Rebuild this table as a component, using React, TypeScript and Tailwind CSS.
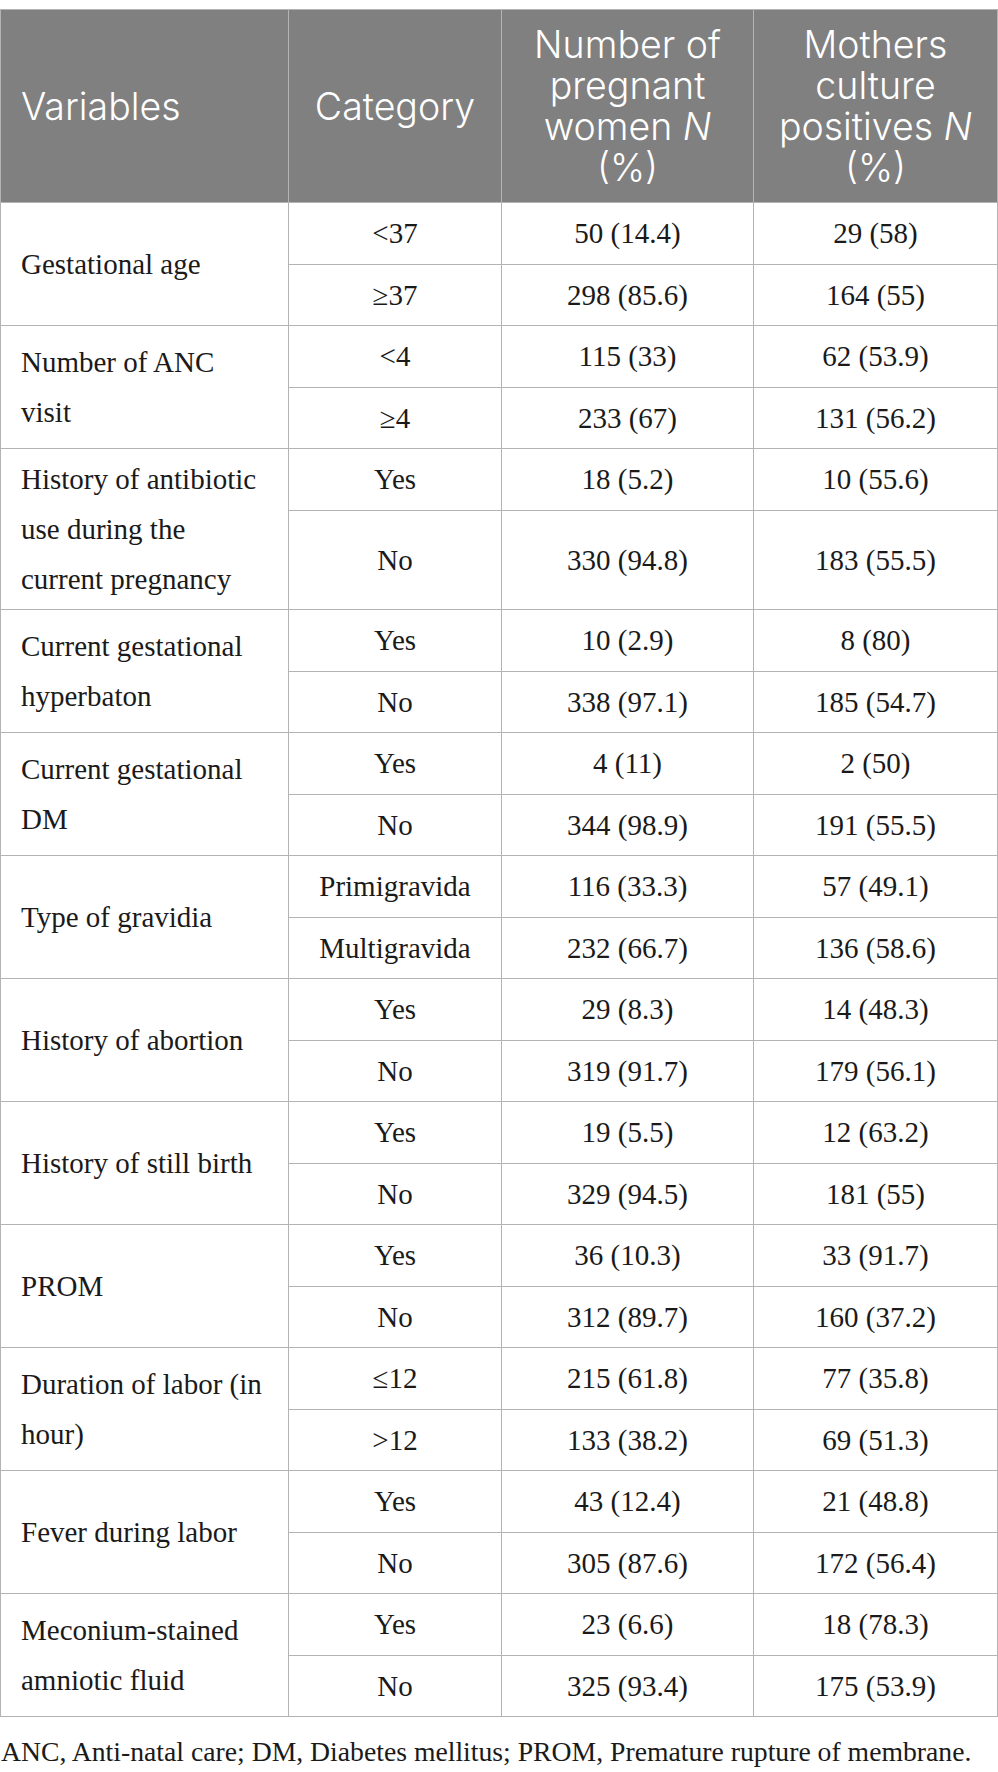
import React from 'react';

type Group = {
  variable: string;
  rows: [string, string, string][];
  tall?: boolean;
};

const groups: Group[] = [
  { variable: 'Gestational age', rows: [['<37', '50 (14.4)', '29 (58)'], ['≥37', '298 (85.6)', '164 (55)']] },
  { variable: 'Number of ANC visit', rows: [['<4', '115 (33)', '62 (53.9)'], ['≥4', '233 (67)', '131 (56.2)']] },
  {
    variable: 'History of antibiotic use during the current pregnancy',
    rows: [['Yes', '18 (5.2)', '10 (55.6)'], ['No', '330 (94.8)', '183 (55.5)']],
    tall: true,
  },
  { variable: 'Current gestational hyperbaton', rows: [['Yes', '10 (2.9)', '8 (80)'], ['No', '338 (97.1)', '185 (54.7)']] },
  { variable: 'Current gestational DM', rows: [['Yes', '4 (11)', '2 (50)'], ['No', '344 (98.9)', '191 (55.5)']] },
  { variable: 'Type of gravidia', rows: [['Primigravida', '116 (33.3)', '57 (49.1)'], ['Multigravida', '232 (66.7)', '136 (58.6)']] },
  { variable: 'History of abortion', rows: [['Yes', '29 (8.3)', '14 (48.3)'], ['No', '319 (91.7)', '179 (56.1)']] },
  { variable: 'History of still birth', rows: [['Yes', '19 (5.5)', '12 (63.2)'], ['No', '329 (94.5)', '181 (55)']] },
  { variable: 'PROM', rows: [['Yes', '36 (10.3)', '33 (91.7)'], ['No', '312 (89.7)', '160 (37.2)']] },
  { variable: 'Duration of labor (in hour)', rows: [['≤12', '215 (61.8)', '77 (35.8)'], ['>12', '133 (38.2)', '69 (51.3)']] },
  { variable: 'Fever during labor', rows: [['Yes', '43 (12.4)', '21 (48.8)'], ['No', '305 (87.6)', '172 (56.4)']] },
  { variable: 'Meconium-stained amniotic fluid', rows: [['Yes', '23 (6.6)', '18 (78.3)'], ['No', '325 (93.4)', '175 (53.9)']] },
];

const serif = "font-['Liberation_Serif','Times_New_Roman',serif]";

export default function App() {
  return (
    <div className="w-[998px] bg-white pt-[9px]">
      <table className="w-[997px] table-fixed border-collapse">
        <colgroup>
          <col className="w-[288px]" />
          <col className="w-[213px]" />
          <col className="w-[252px]" />
          <col className="w-[244px]" />
        </colgroup>
        <thead>
          <tr className="h-[193px] bg-[#808080] text-[37.5px] leading-[41px] font-light text-white font-['Inter','Lato',sans-serif]">
            <th className="border border-[#b3b3b3] pl-[20px] pr-[16px] text-left font-light align-middle">Variables</th>
            <th className="border border-[#b3b3b3] px-[12px] text-center font-light align-middle">Category</th>
            <th className="border border-[#b3b3b3] px-[20px] text-center font-light align-middle">
              Number of pregnant women <i>N</i> (%)
            </th>
            <th className="border border-[#b3b3b3] px-[16px] text-center font-light align-middle">
              Mothers culture positives <i>N</i> (%)
            </th>
          </tr>
        </thead>
        <tbody className={`${serif} text-[29px] leading-[50px] text-[#1a1a1a]`}>
          {groups.map((g) =>
            g.rows.map((r, i) => (
              <tr key={g.variable + i} className={g.tall && i === 1 ? 'h-[99px]' : 'h-[61.5px]'}>
                {i === 0 && (
                  <td rowSpan={2} className="border border-[#b3b3b3] py-[5px] pl-[20px] pr-[22px] text-left align-middle">
                    {g.variable}
                  </td>
                )}
                <td className="border border-[#b3b3b3] px-2 text-center align-middle">{r[0]}</td>
                <td className="border border-[#b3b3b3] px-2 text-center align-middle">{r[1]}</td>
                <td className="border border-[#b3b3b3] px-2 text-center align-middle">{r[2]}</td>
              </tr>
            ))
          )}
        </tbody>
      </table>
      <p className={`${serif} mt-[10px] pl-[1px] text-[27.7px] leading-[50px] text-[#1a1a1a]`}>
        ANC, Anti-natal care; DM, Diabetes mellitus; PROM, Premature rupture of membrane.
      </p>
    </div>
  );
}
